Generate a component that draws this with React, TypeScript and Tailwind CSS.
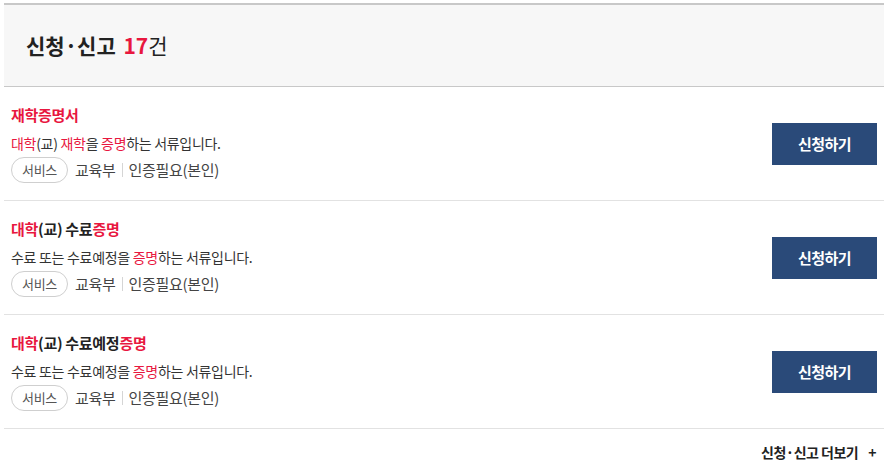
import type { ReactNode } from "react";

type Item = {
  title: ReactNode;
  desc: ReactNode;
};

const R = ({ children }: { children: ReactNode }) => <span className="text-[#e8173f]">{children}</span>;

const items: Item[] = [
  {
    title: <R>재학증명서</R>,
    desc: (
      <>
        <R>대학</R>(교) <R>재학</R>을 <R>증명</R>하는 서류입니다.
      </>
    ),
  },
  {
    title: (
      <>
        <R>대학</R>(교) 수료<R>증명</R>
      </>
    ),
    desc: (
      <>
        수료 또는 수료예정을 <R>증명</R>하는 서류입니다.
      </>
    ),
  },
  {
    title: (
      <>
        <R>대학</R>(교) 수료예정<R>증명</R>
      </>
    ),
    desc: (
      <>
        수료 또는 수료예정을 <R>증명</R>하는 서류입니다.
      </>
    ),
  },
];

function Row({ item }: { item: Item }) {
  return (
    <li className="flex items-center justify-between border-b border-[#e2e2e2] pl-[7px] pr-[7px] pt-[18px] pb-[17px]">
      <div className="flex flex-col">
        <p className="text-[15px] font-bold leading-[20px] text-[#222] tracking-[-0.3px]">{item.title}</p>
        <p className="mt-[8px] text-[14px] leading-[20px] text-[#333] tracking-[-0.3px]">{item.desc}</p>
        <div className="mt-[4px] flex items-center text-[15px] text-[#444] tracking-[-0.3px]">
          <span className="flex h-[26px] items-center rounded-full border border-[#cfcfcf] px-[10px] text-[13px] text-[#555]">
            서비스
          </span>
          <span className="ml-[7px]">교육부</span>
          <span className="mx-[6px] h-[14px] w-px bg-[#d5d5d5]" />
          <span>인증필요(본인)</span>
        </div>
      </div>
      <button
        type="button"
        className="h-[42px] w-[105px] bg-[#2a4a79] text-[15px] font-bold text-white tracking-[-0.5px]"
      >
        신청하기
      </button>
    </li>
  );
}

export default function App() {
  return (
    <div
      className="min-h-[472px] bg-white px-[4px] pt-[3px] pr-[9px]"
      style={{ fontFamily: '"Noto Sans CJK KR", "Noto Sans", sans-serif' }}
    >
      <div className="flex h-[84px] items-center border-t-2 border-b border-t-[#c8c8c8] border-b-[#c8c8c8] bg-[#f7f7f7] pl-[22px]">
        <h2 className="text-[21px] font-bold text-[#222]">
          신청·신고 <span className="ml-[3px] text-[#e8173f]">17</span>
          <span className="font-normal">건</span>
        </h2>
      </div>
      <ul>
        {items.map((item, i) => (
          <Row key={i} item={item} />
        ))}
      </ul>
      <div className="flex justify-end pr-[8px] pt-[13px]">
        <a className="flex items-center text-[14px] font-bold text-[#222] tracking-[-0.5px]">
          신청·신고 더보기
          <span className="ml-[10px] text-[14px]">+</span>
        </a>
      </div>
    </div>
  );
}
